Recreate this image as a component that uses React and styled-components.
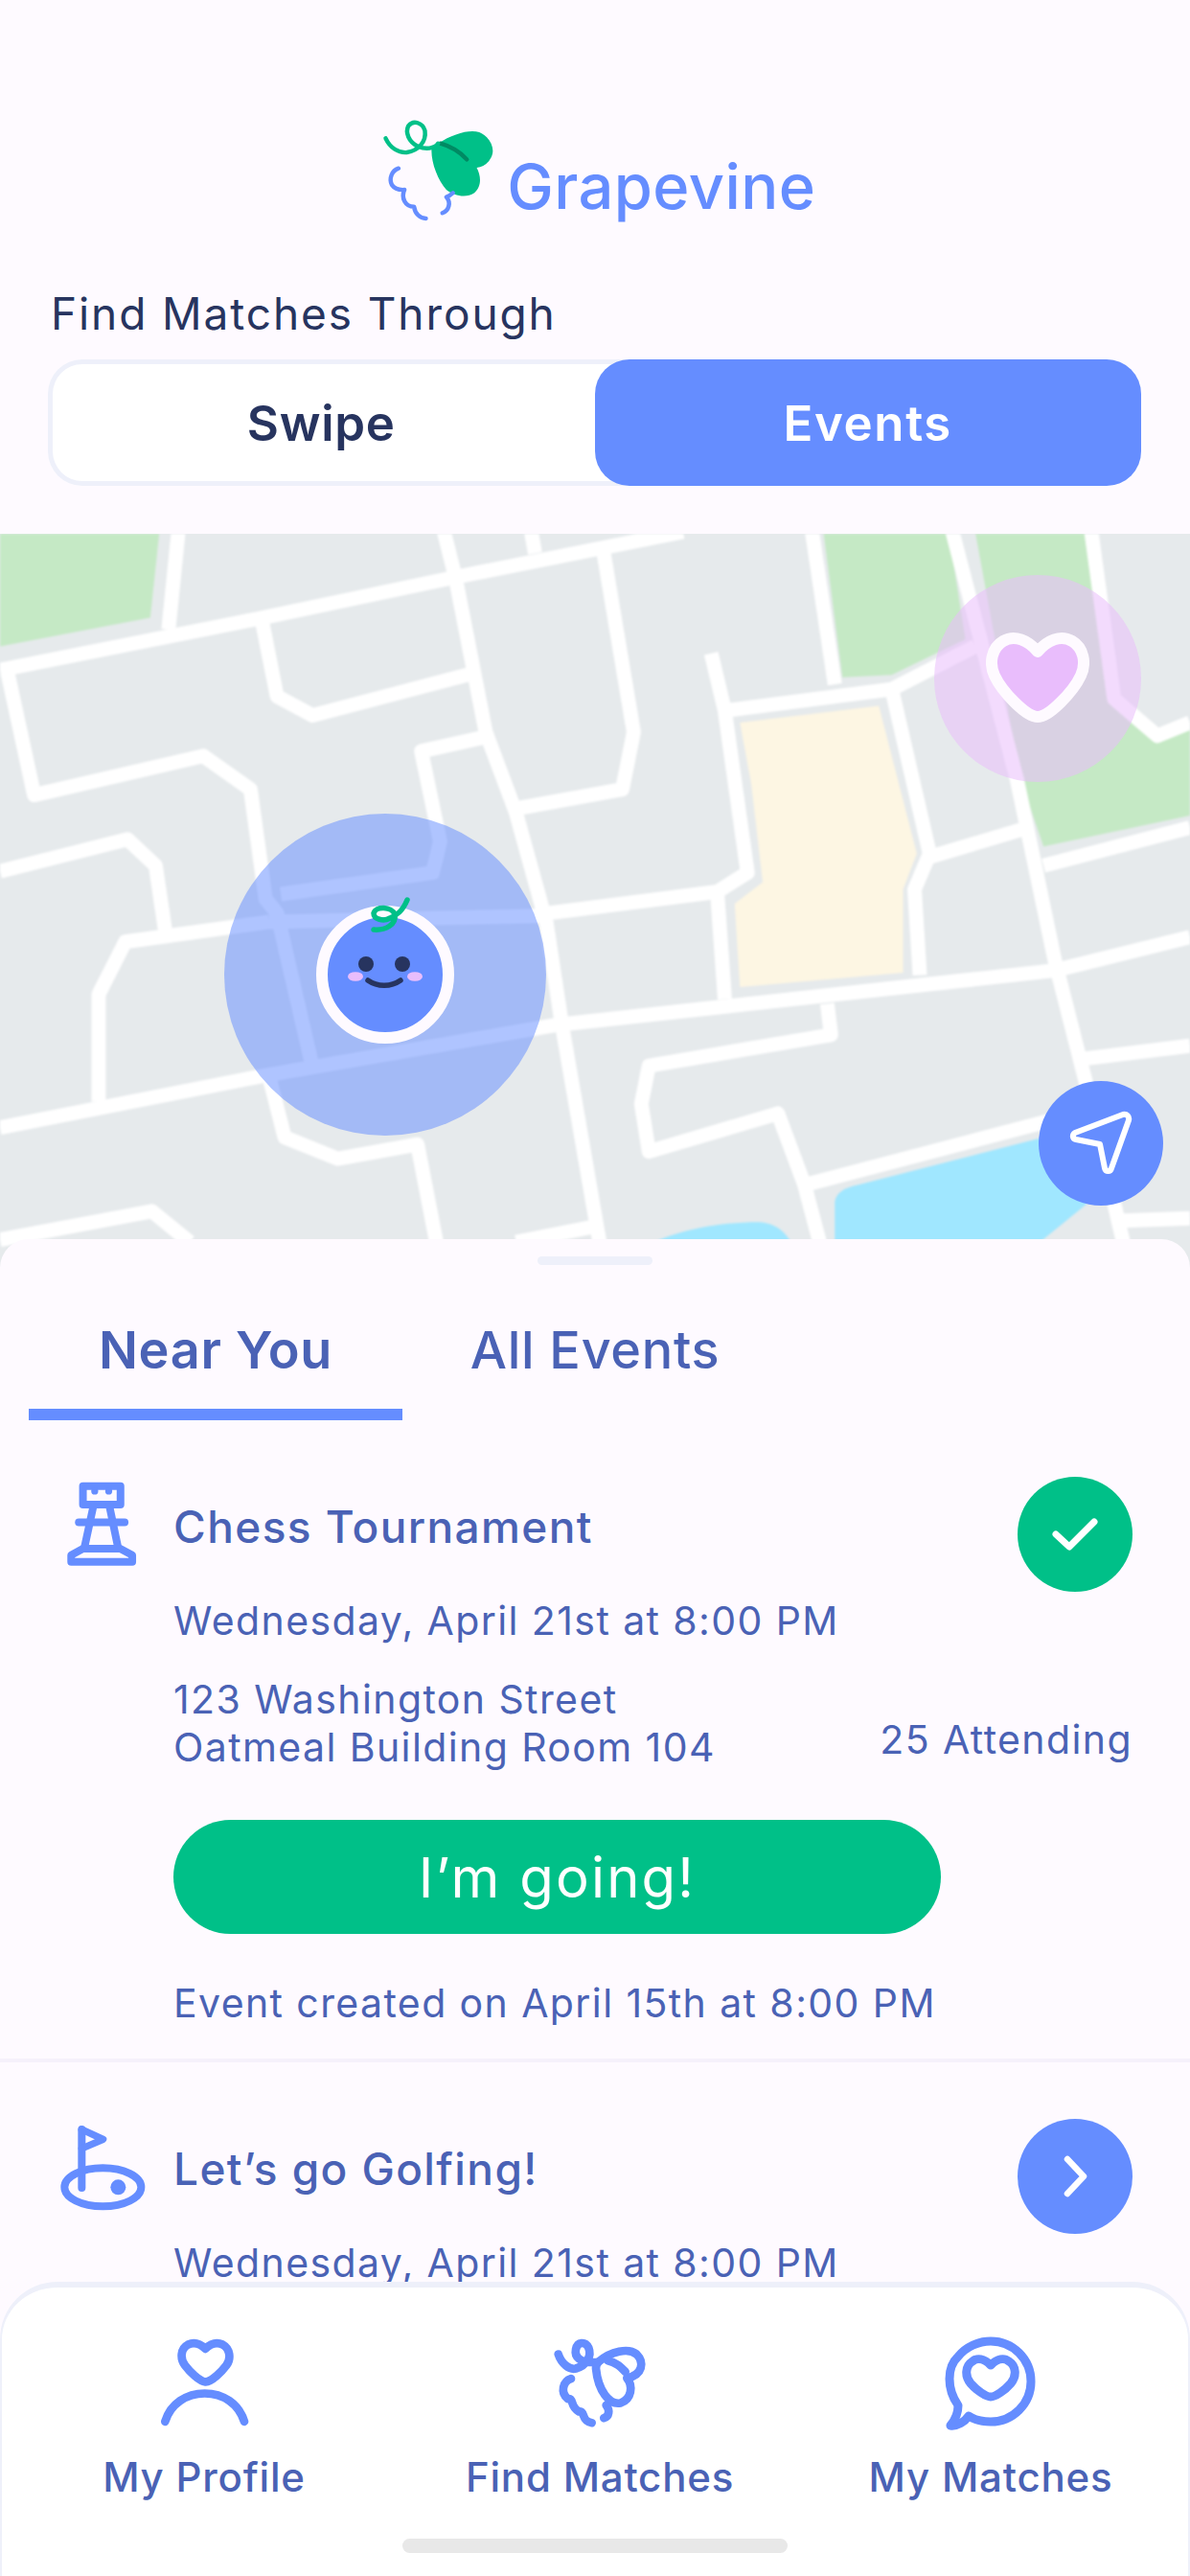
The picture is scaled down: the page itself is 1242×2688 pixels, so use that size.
import React from 'react';
import styled, { createGlobalStyle } from 'styled-components';

const BLUE = '#658dff';
const GREEN = '#00c088';
const INK = '#4a62b5';
const DARK = '#27345f';
const PAPER = '#fefaff';

const Global = createGlobalStyle`
  html, body { margin: 0; padding: 0; background: ${PAPER}; }
  * { box-sizing: border-box; }
  body { font-family: Inter, "Noto Sans", sans-serif; }
`;

const Screen = styled.div`
  position: relative; width: 1242px; height: 2688px; overflow: hidden;
  background: ${PAPER}; display: flex; flex-direction: column;
`;
const Header = styled.header`
  height: 557px; padding: 123px 50px 0; display: flex; flex-direction: column;
`;
const LogoRow = styled.div`
  display: flex; align-items: flex-start; justify-content: center; gap: 12px; padding-left: 6px; height: 110px;
`;
const LogoText = styled.span`
  font-size: 65px; line-height: 1; font-weight: 500; color: ${BLUE}; margin-top: 39px; letter-spacing: 0.4px;
`;
const Prompt = styled.div`
  margin-top: 66px; padding-left: 3px; font-size: 46px; line-height: 56px; color: ${DARK}; font-weight: 400; letter-spacing: 1.9px;
`;
const Toggle = styled.div`
  margin-top: 20px; width: 1141px; height: 132px; border-radius: 36px; background: #fff;
  box-shadow: inset 0 0 0 5px #eef0fa; display: flex;
`;
const Segment = styled.div`
  flex: 1; display: flex; align-items: center; justify-content: center; border-radius: 36px;
  font-size: 51px; font-weight: 600; letter-spacing: ${p => (p.$active ? 1.6 : 0.7)}px;
  color: ${p => (p.$active ? '#fff' : DARK)};
  background: ${p => (p.$active ? BLUE : 'transparent')};
`;
const MapArea = styled.div`
  position: relative; height: 766px; overflow: hidden; background: #e6eaec;
`;
const MapSvg = styled.svg`
  display: block; width: 1242px; height: 766px; filter: blur(0.8px);
`;
const Pulse = styled.div`
  position: absolute; left: 234px; top: 292px; width: 336px; height: 336px; border-radius: 50%;
  background: rgba(101,141,255,0.52); display: flex; align-items: center; justify-content: center;
`;
const Face = styled.svg`
  display: block; width: 144px; height: 170px; margin-top: -26px; overflow: visible;
`;
const HeartPin = styled.div`
  position: absolute; left: 975px; top: 43px; width: 216px; height: 216px; border-radius: 50%;
  background: rgba(233,189,252,0.55); display: flex; align-items: center; justify-content: center;
`;
const LocateButton = styled.div`
  position: absolute; left: 1084px; top: 571px; width: 130px; height: 130px; border-radius: 50%;
  background: ${BLUE}; display: flex; align-items: center; justify-content: center;
`;
const Sheet = styled.section`
  position: relative; margin-top: -30px; flex: 1; min-height: 0; background: ${PAPER};
  border-radius: 30px 30px 0 0; overflow: hidden;
`;
const Handle = styled.div`
  width: 120px; height: 9px; border-radius: 5px; background: #eef0fa; margin: 18px auto 0;
`;
const Tabs = styled.div`
  display: flex; gap: 6px; padding-left: 30px; margin-top: 0;
`;
const Tab = styled.div`
  width: 390px; height: 162px; padding-top: 59px; text-align: center; font-size: 54px; line-height: 60px;
  letter-spacing: 0.7px;
  color: ${INK}; font-weight: ${p => (p.$active ? 600 : 500)};
  border-bottom: 12px solid ${p => (p.$active ? BLUE : 'transparent')};
`;
const Card = styled.article`
  padding-top: 59px; height: 670px;
  border-bottom: 4px solid #f6f1fb;
`;
const CardHead = styled.div`
  display: flex; align-items: center; height: 120px; padding-right: 60px;
`;
const IconSlot = styled.div`
  width: 181px; flex: none; display: flex; margin-top: ${p => p.$lift}px; padding-left: ${p => p.$left}px;
`;
const Title = styled.h3`
  flex: 1; margin: -17px 0 0; font-size: 46px; line-height: 60px; font-weight: 500; color: ${INK}; letter-spacing: 1.4px;
`;
const Status = styled.div`
  width: 120px; height: 120px; border-radius: 50%; background: ${p => p.$bg};
  display: flex; align-items: center; justify-content: center;
`;
const CardBody = styled.div`
  padding: 5px 60px 0 181px;
`;
const Line = styled.div`
  font-size: 41px; line-height: 50px; color: ${INK}; font-weight: 400; white-space: nowrap; letter-spacing: 1.4px;
`;
const AddressRow = styled.div`
  display: flex; justify-content: space-between; align-items: flex-end; margin-top: 32px;
`;
const Attending = styled(Line)`
  margin-bottom: 8px;
`;
const GoingButton = styled.div`
  margin-top: 51px; width: 801px; height: 119px; border-radius: 60px; background: ${GREEN};
  display: flex; align-items: center; justify-content: center; color: #fff; font-size: 58px; font-weight: 400; letter-spacing: 2.2px;
`;
const Created = styled(Line)`
  margin-top: 47px;
`;
const BottomNav = styled.nav`
  position: absolute; left: 0; right: 0; bottom: 0; height: 307px; background: #fff;
  border-top: 6px solid #eef0fa; border-left: 2px solid #eef0fa; border-right: 2px solid #eef0fa;
  border-radius: 60px 60px 0 0; display: flex; flex-direction: column;
`;
const NavGrid = styled.div`
  display: grid; grid-template-columns: 422px 404px 412px; height: 262px;
`;
const NavItem = styled.div`
  display: flex; flex-direction: column; align-items: center; padding-top: 51px;
`;
const NavIconBox = styled.div`
  height: 100px; display: flex; align-items: flex-start; justify-content: center;
`;
const NavLabel = styled.div`
  margin-top: 22px; font-size: 42px; line-height: 50px; font-weight: 500; color: ${INK}; white-space: nowrap; letter-spacing: 0.8px;
`;
const HomeBar = styled.div`
  width: 402px; height: 15px; border-radius: 8px; background: #e8e8e8; margin: 0 auto;
`;

const roads = [
  '0,320 340,212 600,125 900,30',
  '235,30 222,235',
  '585,30 600,125 640,450 680,620 720,850 740,1060 790,1520',
  '700,30 705,75',
  '795,70 835,450 820,570 675,612',
  '345,215 365,375 412,415 620,328',
  '10,325 45,582 268,500 330,570 350,800 365,830 410,1140',
  '640,460 555,490 580,680 570,745 370,790',
  '0,742 168,675 205,730 218,870',
  '130,1225 130,1000 165,890 355,848',
  '355,848 720,835',
  '712,832 945,785 985,745 955,405 937,285',
  '945,785 955,1010',
  '955,405 1175,360 1285,270',
  '1070,30 1100,350',
  '1175,360 1225,705 1205,780 1212,960',
  '1225,712 1345,655',
  '1255,30 1340,550 1390,930 1430,1180 1480,1520',
  '1438,30 1468,380 1525,458 1568,430',
  '1375,730 1568,650',
  '0,1280 350,1170 730,1065 1390,950 1568,880',
  '355,1175 375,1300 445,1345 550,1315 575,1520',
  '1090,1020 1095,1085 855,1150 845,1230 855,1330 1025,1250 1060,1400 1080,1520',
  '1060,1400 1420,1250',
  '1430,1135 1568,1108',
  '1480,1475 1568,1470',
  '0,1515 200,1455 250,1520',
  '680,1520 790,1485',
];

function MapLayer() {
  return (
    <MapSvg viewBox="0 34 1568 1540" preserveAspectRatio="none">
      <rect x="0" y="0" width="1568" height="1600" fill="#e6eaec" />
      <g fill="#c5e9c5">
        <polygon points="0,30 210,30 198,210 0,270" />
        <polygon points="1085,30 1250,30 1272,255 1175,330 1110,335" />
        <polygon points="1285,30 1432,30 1465,385 1525,470 1568,440 1568,625 1375,690 1345,550" />
      </g>
      <polygon fill="#fdf6e3" points="975,430 1158,395 1208,705 1190,780 1190,955 975,985 968,810 1005,765 990,560" />
      <g fill="#a0e7ff">
        <path d="M1100,1600 L1100,1440 C1100,1415 1115,1405 1130,1400 L1375,1300 L1432,1440 L1370,1520 L1360,1600 Z" />
        <path d="M840,1540 C880,1495 950,1478 1000,1478 C1022,1480 1038,1498 1048,1540 Z" />
      </g>
      <g fill="none" stroke="#fff" strokeWidth="15" strokeLinejoin="round">
        {roads.map(r => <polyline key={r} points={r} vectorEffect="non-scaling-stroke" />)}
      </g>
    </MapSvg>
  );
}

function Logo() {
  return (
    <svg width="120.5" height="110" viewBox="170 70 350 330" preserveAspectRatio="none" style={{ display: 'block', flex: 'none' }}>
      <path fill={GREEN} d="M345,150 C390,120 440,105 470,115 C505,130 520,170 505,195 C495,215 480,225 462,226 C475,250 478,285 455,305 C430,322 395,315 370,295 C345,265 325,215 325,172 C325,160 335,155 345,150 Z" />
      <path fill="none" stroke="#008a63" strokeWidth="13" strokeLinecap="round" d="M352,150 C380,158 410,175 432,200" />
      <path fill="none" stroke={GREEN} strokeWidth="13" strokeLinecap="round" d="M186,134 C200,165 225,180 250,178 C285,172 310,145 305,110 C298,85 270,75 255,95 C245,115 255,145 285,160 C305,168 335,168 345,150" />
      <g fill="none" stroke={BLUE} strokeWidth="13" strokeLinecap="round" strokeLinejoin="round">
        <path d="M225,228 C205,235 195,260 205,280 C215,295 230,296 243,295 C232,320 245,348 272,348 C275,370 290,385 308,385" />
        <path d="M358,368 C378,360 385,335 370,318 C380,315 385,310 390,305" />
      </g>
    </svg>
  );
}

function Rook() {
  return (
    <svg width="77" height="93" viewBox="90 70 230 280" style={{ display: 'block' }}>
      <g fill="none" stroke={BLUE} strokeWidth="24" strokeLinecap="round" strokeLinejoin="round">
        <rect x="145" y="90" width="118" height="58" />
        <path d="M178,152 L150,282" />
        <path d="M228,152 L255,282" />
        <path d="M132,204 L276,204" />
        <path d="M108,328 L108,307 L145,287 L262,287 L300,307 L300,328 Z" />
      </g>
      <circle cx="182" cy="106" r="11" fill={BLUE} />
      <circle cx="226" cy="106" r="11" fill={BLUE} />
    </svg>
  );
}

function Golf() {
  return (
    <svg width="90" height="90" viewBox="68 80 270 270" style={{ display: 'block' }}>
      <g fill="none" stroke={BLUE} strokeLinecap="round" strokeLinejoin="round">
        <ellipse cx="204" cy="276" rx="120" ry="60" strokeWidth="24" />
        <path d="M138,95 L138,278" strokeWidth="24" />
        <path d="M138,95 L205,126 L138,155" strokeWidth="22" />
      </g>
      <circle cx="252" cy="276" r="24" fill={BLUE} />
    </svg>
  );
}

function ProfileIcon() {
  return (
    <svg width="100" height="97" viewBox="120 50 300 290" style={{ display: 'block' }}>
      <g fill="none" stroke={BLUE} strokeWidth="26" strokeLinecap="round" strokeLinejoin="round">
        <path d="M274,88 C255,70 235,68 220,75 C195,88 195,120 210,140 C225,160 255,190 274,192 C295,190 325,160 340,140 C355,120 352,88 328,75 C313,68 293,70 274,88 Z" />
        <path d="M148,316 C165,260 215,228 272,228 C330,228 378,260 396,316" />
      </g>
    </svg>
  );
}

function MatchesIcon() {
  return (
    <svg width="100" height="97" viewBox="80 50 300 290" style={{ display: 'block' }}>
      <g fill="none" stroke={BLUE} strokeWidth="26" strokeLinecap="round" strokeLinejoin="round">
        <path d="M100,105 C110,135 135,155 155,150 C190,140 205,110 195,85 C185,65 160,65 155,90 C150,115 170,130 205,130 C212,130 218,132 225,130" />
        <path d="M225,130 C265,95 320,85 345,105 C370,130 365,170 315,180 C335,205 330,245 295,258 C260,265 225,220 218,150 C218,140 220,135 225,130 Z" />
        <path d="M255,125 C280,130 295,145 310,160" />
        <path d="M140,182 C115,190 105,225 130,245 C150,240 135,270 165,285 C185,280 170,315 205,320" />
        <path d="M243,305 C260,300 262,280 250,265" />
      </g>
    </svg>
  );
}

function ChatIcon() {
  return (
    <svg width="96" height="98" viewBox="0 0 96 98" style={{ display: 'block' }}>
      <g fill="none" stroke={BLUE} strokeWidth="9" strokeLinejoin="round" strokeLinecap="round">
        <path d="M48,5 A42,42 0 1 1 48,89 C39,89 31,87 25,83 C21,89 13,94 6,93 C11,87 14,80 14,72 C2,55 2,32 14,21 C22,11 35,5 48,5 Z" />
        <path d="M48,30 C41,23 34,22 29,26 C21,31 21,42 27,49 C33,56 43,63 48,63 C53,63 63,56 69,49 C75,42 75,31 67,26 C62,22 55,23 48,30 Z" />
      </g>
    </svg>
  );
}

export default function App() {
  return (
    <Screen>
      <Global />
      <Header>
        <LogoRow>
          <Logo />
          <LogoText>Grapevine</LogoText>
        </LogoRow>
        <Prompt>Find Matches Through</Prompt>
        <Toggle>
          <Segment>Swipe</Segment>
          <Segment $active>Events</Segment>
        </Toggle>
      </Header>

      <MapArea>
        <MapLayer />
        <Pulse>
          <Face viewBox="0 -26 144 170">
            <circle cx="72" cy="72" r="66" fill={BLUE} stroke={PAPER} strokeWidth="12" />
            <circle cx="52" cy="61" r="8" fill={DARK} />
            <circle cx="90" cy="61" r="8" fill={DARK} />
            <ellipse cx="41" cy="74" rx="8" ry="4.8" fill="#e9bdfc" />
            <ellipse cx="103" cy="74" rx="8" ry="4.8" fill="#e9bdfc" />
            <path d="M54,78 C64,85 78,85 88,78" fill="none" stroke={DARK} strokeWidth="5.5" strokeLinecap="round" />
            <path d="M60,25 C72,26 84,20 82,9 C79,1 62,0 60,8 C60,14 70,17 77,13 C84,10 90,6 95,-6" fill="none" stroke={GREEN} strokeWidth="5.5" strokeLinecap="round" />
          </Face>
        </Pulse>
        <HeartPin>
          <svg width="108" height="96" viewBox="0 0 108 96" style={{ display: 'block', marginTop: '-4px' }}>
            <path d="M54,22 C44,10 30,4 18,11 C6,18 3,34 9,47 C17,64 42,90 54,90 C66,90 91,64 99,47 C105,34 102,18 90,11 C78,4 64,10 54,22 Z" fill="#e9bdfc" stroke={PAPER} strokeWidth="12" strokeLinejoin="round" />
          </svg>
        </HeartPin>
        <LocateButton>
          <svg width="66" height="68" viewBox="0 0 66 68" style={{ display: 'block' }}>
            <path d="M6,23 L56,4 C60,3 63,6 62,10 L44,60 C43,64 38,64 37,60 L32,35 L7,30 C3,29 3,25 6,23 Z" fill="none" stroke="#fff" strokeWidth="6" strokeLinejoin="round" />
          </svg>
        </LocateButton>
      </MapArea>

      <Sheet>
        <Handle />
        <Tabs>
          <Tab $active>Near You</Tab>
          <Tab>All Events</Tab>
        </Tabs>

        <Card>
          <CardHead>
            <IconSlot $left={68} $lift={-22}><Rook /></IconSlot>
            <Title>Chess Tournament</Title>
            <Status $bg={GREEN}>
              <svg width="52" height="40" viewBox="0 0 52 40">
                <path d="M6,20 L20,33 L46,7" fill="none" stroke="#fff" strokeWidth="7" strokeLinecap="round" strokeLinejoin="round" />
              </svg>
            </Status>
          </CardHead>
          <CardBody>
            <Line>Wednesday, April 21st at 8:00 PM</Line>
            <AddressRow>
              <Line>123 Washington Street<br />Oatmeal Building Room 104</Line>
              <Attending>25 Attending</Attending>
            </AddressRow>
            <GoingButton>I’m going!</GoingButton>
            <Created>Event created on April 15th at 8:00 PM</Created>
          </CardBody>
        </Card>

        <Card>
          <CardHead>
            <IconSlot $left={62} $lift={-18}><Golf /></IconSlot>
            <Title>Let’s go Golfing!</Title>
            <Status $bg={BLUE}>
              <svg width="32" height="48" viewBox="0 0 32 48">
                <path d="M8,6 L25,24 L8,42" fill="none" stroke="#fff" strokeWidth="6.5" strokeLinecap="round" strokeLinejoin="round" />
              </svg>
            </Status>
          </CardHead>
          <CardBody>
            <Line>Wednesday, April 21st at 8:00 PM</Line>
          </CardBody>
        </Card>
      </Sheet>

      <BottomNav>
        <NavGrid>
          <NavItem><NavIconBox><ProfileIcon /></NavIconBox><NavLabel>My Profile</NavLabel></NavItem>
          <NavItem><NavIconBox><MatchesIcon /></NavIconBox><NavLabel>Find Matches</NavLabel></NavItem>
          <NavItem><NavIconBox><ChatIcon /></NavIconBox><NavLabel>My Matches</NavLabel></NavItem>
        </NavGrid>
        <HomeBar />
      </BottomNav>
    </Screen>
  );
}
